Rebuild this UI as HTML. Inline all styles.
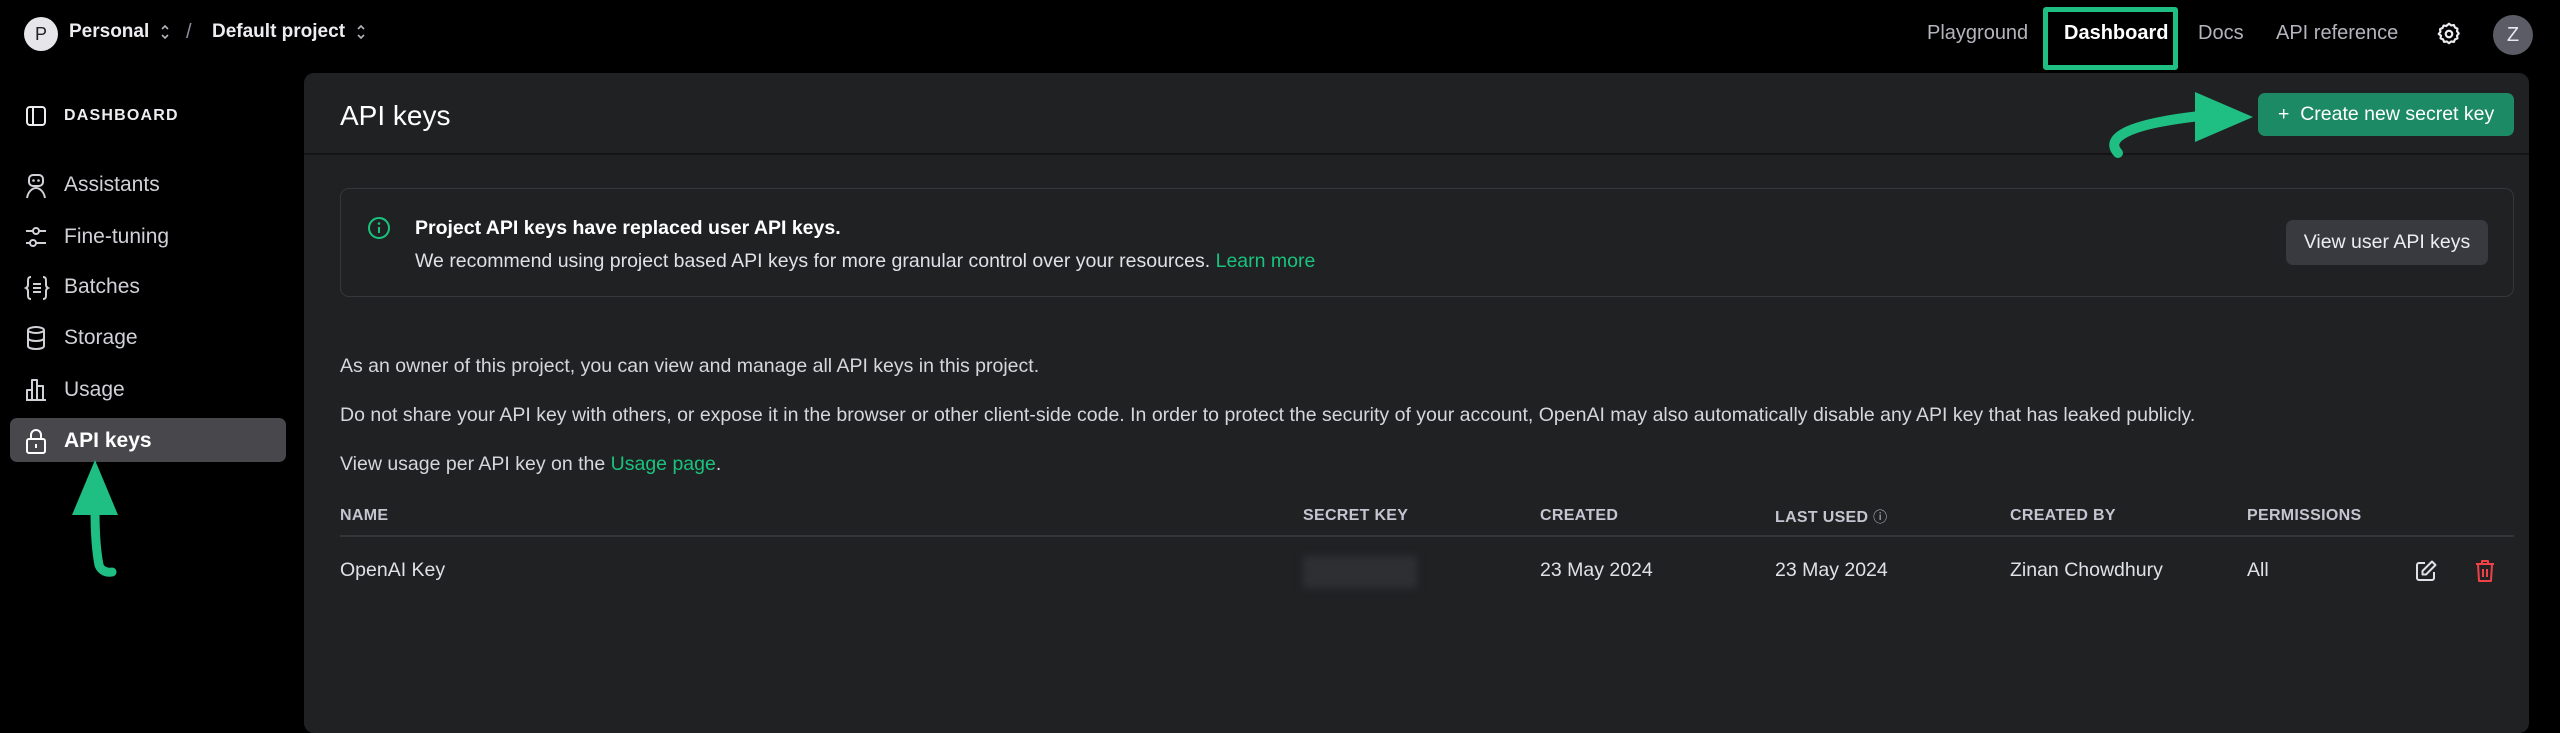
<!DOCTYPE html>
<html><head><meta charset="utf-8">
<style>
*{box-sizing:border-box;margin:0;padding:0}
body{width:2560px;height:719px;background:#000;font-family:"Liberation Sans",sans-serif;color:#ececf1;position:relative;overflow:hidden}
.a{position:absolute;white-space:nowrap}
.nav{font-size:20px;color:#b4b4bd;top:22px}
.side{font-size:21px;color:#d1d1d8;left:64px}
.sico{position:absolute;left:24px}
.p{font-size:19.5px;color:#d6d6dc;left:340px}
.th{font-size:16px;font-weight:bold;color:#c5c5d2;top:507px;letter-spacing:.3px}
.td{font-size:19.5px;color:#e0e0e6;top:559px}
.chev{display:inline-block;vertical-align:middle;margin-left:10px}
</style></head><body>

<!-- top bar -->
<div class="a" style="left:24px;top:17px;width:34px;height:34px;border-radius:50%;background:#e6e6ea;color:#222;font-size:18px;text-align:center;line-height:34px">P</div>
<div class="a" style="left:69px;top:21px;font-size:19px;font-weight:bold;color:#ececf1">Personal<svg class="chev" width="12" height="20" viewBox="0 0 12 20"><path d="M3 7l3-3 3 3M3 13l3 3 3-3" stroke="#b4b4bd" stroke-width="1.6" fill="none"/></svg></div>
<div class="a" style="left:186px;top:21px;font-size:20px;color:#8e8ea0">/</div>
<div class="a" style="left:212px;top:21px;font-size:19px;font-weight:bold;color:#ececf1">Default project<svg class="chev" width="12" height="20" viewBox="0 0 12 20"><path d="M3 7l3-3 3 3M3 13l3 3 3-3" stroke="#b4b4bd" stroke-width="1.6" fill="none"/></svg></div>

<div class="a nav" style="left:1927px">Playground</div>
<div class="a" style="left:2043px;top:7px;width:135px;height:63px;border:5px solid #1fbf83;border-radius:3px"></div>
<div class="a nav" style="left:2064px;color:#fff;font-weight:bold">Dashboard</div>
<div class="a nav" style="left:2198px">Docs</div>
<div class="a nav" style="left:2276px">API reference</div>
<svg class="a" style="left:2436px;top:21px" width="26" height="26" viewBox="0 0 24 24"><path d="M12 2.5l2 1.6 2.5-.4 1 2.3 2.3 1-.4 2.5 1.6 2-1.6 2 .4 2.5-2.3 1-1 2.3-2.5-.4-2 1.6-2-1.6-2.5.4-1-2.3-2.3-1 .4-2.5L2.5 12l1.6-2-.4-2.5 2.3-1 1-2.3 2.5.4z" stroke="#ececf1" stroke-width="2" fill="none" stroke-linejoin="round"/><circle cx="12" cy="12" r="3" stroke="#ececf1" stroke-width="2" fill="none"/></svg>
<div class="a" style="left:2493px;top:15px;width:40px;height:40px;border-radius:50%;background:#5c5c66;color:#e8e8ee;font-size:20px;text-align:center;line-height:40px">Z</div>

<!-- sidebar -->
<svg class="sico" style="top:104px" width="24" height="24" viewBox="0 0 24 24"><rect x="3" y="3" width="18" height="18" rx="3" stroke="#ececf1" stroke-width="2" fill="none"/><path d="M9 3v18" stroke="#ececf1" stroke-width="2"/></svg>
<div class="a" style="left:64px;top:107px;font-size:16px;font-weight:bold;letter-spacing:1.2px;color:#ececf1">DASHBOARD</div>

<svg class="sico" style="top:172px" width="24" height="28" viewBox="0 0 24 28"><rect x="5" y="3" width="14" height="11" rx="4" stroke="#d1d1d8" stroke-width="2" fill="none"/><circle cx="9.5" cy="8.5" r="1.3" fill="#d1d1d8"/><circle cx="14.5" cy="8.5" r="1.3" fill="#d1d1d8"/><path d="M3 26c1-6 5-10 9-10s8 4 9 10" stroke="#d1d1d8" stroke-width="2" fill="none"/></svg>
<div class="a side" style="top:173px">Assistants</div>
<svg class="sico" style="top:224px" width="24" height="26" viewBox="0 0 24 26"><path d="M2 7h7M15 7h7M2 19h4M12 19h10" stroke="#d1d1d8" stroke-width="2"/><circle cx="12" cy="7" r="3" stroke="#d1d1d8" stroke-width="2" fill="none"/><circle cx="9" cy="19" r="3" stroke="#d1d1d8" stroke-width="2" fill="none"/></svg>
<div class="a side" style="top:225px">Fine-tuning</div>
<svg class="sico" style="top:275px" width="26" height="26" viewBox="0 0 26 26"><path d="M7 2C4 2 4 4 4 7v3c0 2-2 3-2 3s2 1 2 3v3c0 3 0 5 3 5M19 2c3 0 3 2 3 5v3c0 2 2 3 2 3s-2 1-2 3v3c0 3 0 5-3 5M9 9h8M9 13h8M9 17h8" stroke="#d1d1d8" stroke-width="2" fill="none"/></svg>
<div class="a side" style="top:275px">Batches</div>
<svg class="sico" style="top:325px" width="24" height="26" viewBox="0 0 24 26"><ellipse cx="12" cy="5" rx="8" ry="3" stroke="#d1d1d8" stroke-width="2" fill="none"/><path d="M4 5v16c0 2 4 3 8 3s8-1 8-3V5M4 13c0 2 4 3 8 3s8-1 8-3" stroke="#d1d1d8" stroke-width="2" fill="none"/></svg>
<div class="a side" style="top:326px">Storage</div>
<svg class="sico" style="top:376px" width="24" height="26" viewBox="0 0 24 26"><path d="M3 24V14h5v10M8 24V4h5v20M13 24V10h6v14zM2 24h20" stroke="#d1d1d8" stroke-width="2" fill="none" stroke-linejoin="round"/></svg>
<div class="a side" style="top:378px">Usage</div>
<div class="a" style="left:10px;top:418px;width:276px;height:44px;border-radius:7px;background:#47474c"></div>
<svg class="sico" style="top:427px" width="24" height="28" viewBox="0 0 24 28"><path d="M7 12V8a5 5 0 0110 0v4" stroke="#fff" stroke-width="2" fill="none"/><rect x="3" y="12" width="18" height="14" rx="2" stroke="#fff" stroke-width="2" fill="none"/><path d="M12 17v4" stroke="#fff" stroke-width="2"/></svg>
<div class="a side" style="top:429px;color:#fff;font-weight:bold">API keys</div>
<svg class="a" style="left:60px;top:455px" width="70" height="130" viewBox="0 0 70 130"><path d="M35 5L12 60h46z" fill="#1fbf83"/><path d="M35 55c0 20 1 40 4 55 2 6 8 8 13 7" stroke="#1fbf83" stroke-width="9" fill="none" stroke-linecap="round"/></svg>

<!-- main panel -->
<div class="a" style="left:304px;top:73px;width:2225px;height:660px;background:#202123;border-radius:10px"></div>
<div class="a" style="left:304px;top:153px;width:2225px;height:2px;background:#141416"></div>
<div class="a" style="left:340px;top:100px;font-size:28px;color:#fff">API keys</div>
<div class="a" style="left:2258px;top:93px;width:256px;height:43px;border-radius:7px;background:#1d8a66;color:#fff;font-size:19.5px;line-height:43px;padding-left:20px">+&nbsp; Create new secret key</div>
<svg class="a" style="left:2100px;top:85px" width="160" height="80" viewBox="0 0 160 80"><path d="M18 68C6 55 20 40 100 31" stroke="#1fbf83" stroke-width="10" fill="none" stroke-linecap="round"/><path d="M95 7v50l58-25z" fill="#1fbf83"/></svg>

<div class="a" style="left:340px;top:188px;width:2174px;height:109px;border:1.5px solid #36373b;border-radius:9px"></div>
<svg class="a" style="left:367px;top:216px" width="24" height="24" viewBox="0 0 24 24"><circle cx="12" cy="12" r="10" stroke="#19c37d" stroke-width="2" fill="none"/><path d="M12 11v6" stroke="#19c37d" stroke-width="2"/><circle cx="12" cy="7.5" r="1.3" fill="#19c37d"/></svg>
<div class="a" style="left:415px;top:217px;font-size:19.5px;font-weight:bold;color:#fff">Project API keys have replaced user API keys.</div>
<div class="a" style="left:415px;top:250px;font-size:19.5px;color:#e0e0e6">We recommend using project based API keys for more granular control over your resources. <span style="color:#19c37d">Learn more</span></div>
<div class="a" style="left:2286px;top:220px;width:202px;height:45px;border-radius:7px;background:#393a40;color:#ececf1;font-size:19.5px;line-height:45px;text-align:center">View user API keys</div>

<div class="a p" style="top:355px">As an owner of this project, you can view and manage all API keys in this project.</div>
<div class="a p" style="top:404px">Do not share your API key with others, or expose it in the browser or other client-side code. In order to protect the security of your account, OpenAI may also automatically disable any API key that has leaked publicly.</div>
<div class="a p" style="top:453px">View usage per API key on the <span style="color:#19c37d">Usage page</span>.</div>

<div class="a th" style="left:340px">NAME</div>
<div class="a th" style="left:1303px">SECRET KEY</div>
<div class="a th" style="left:1540px">CREATED</div>
<div class="a th" style="left:1775px">LAST USED <span style="font-weight:normal;font-size:14px">ⓘ</span></div>
<div class="a th" style="left:2010px">CREATED BY</div>
<div class="a th" style="left:2247px">PERMISSIONS</div>
<div class="a" style="left:340px;top:535px;width:2174px;height:2px;background:#35363a"></div>

<div class="a td" style="left:340px">OpenAI Key</div>
<div class="a" style="left:1303px;top:556px;width:114px;height:32px;background:#2e2f33;filter:blur(4px)"></div>
<div class="a td" style="left:1540px">23 May 2024</div>
<div class="a td" style="left:1775px">23 May 2024</div>
<div class="a td" style="left:2010px">Zinan Chowdhury</div>
<div class="a td" style="left:2247px">All</div>
<svg class="a" style="left:2414px;top:559px" width="24" height="24" viewBox="0 0 24 24"><path d="M11 4H5a2 2 0 00-2 2v13a2 2 0 002 2h13a2 2 0 002-2v-6" stroke="#e0e0e6" stroke-width="2" fill="none"/><path d="M18 2.5l3.5 3.5L12 15.5H8.5V12z" stroke="#e0e0e6" stroke-width="2" fill="none" stroke-linejoin="round"/></svg>
<svg class="a" style="left:2473px;top:558px" width="24" height="26" viewBox="0 0 24 26"><path d="M3 6h18M9 6V3h6v3M5 6l1 17h12l1-17M10 11v8M14 11v8" stroke="#ef4146" stroke-width="2" fill="none" stroke-linejoin="round"/></svg>
</body></html>
